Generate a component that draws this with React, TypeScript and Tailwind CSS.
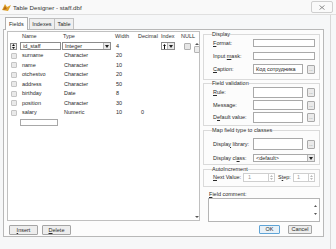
import React from "react";

const rows = [
  { name: "surname", type: "Character", width: "20", dec: "" },
  { name: "name", type: "Character", width: "10", dec: "" },
  { name: "otchestvo", type: "Character", width: "20", dec: "" },
  { name: "address", type: "Character", width: "50", dec: "" },
  { name: "birthday", type: "Date", width: "8", dec: "" },
  { name: "position", type: "Character", width: "30", dec: "" },
  { name: "salary", type: "Numeric", width: "10", dec: "0" },
];

const cols = "grid-cols-[12px_41px_52px_25px_23px_20px_13px]";

function Ellipsis() {
  return (
    <div className="ml-[4px] w-[8px] h-[9px] border border-[#a9a9a9] bg-[#eaeaea] rounded-[1px] flex items-end justify-center pb-[1px] text-[4px] leading-[4px] text-[#555]">
      ...
    </div>
  );
}

function DropBtn() {
  return (
    <div className="w-[7px] self-stretch border-l border-[#b5b5b5] bg-[#e9e9e9] flex items-center justify-center">
      <svg width="4" height="3" viewBox="0 0 4 3">
        <path d="M0 0h4L2 3z" fill="#222" />
      </svg>
    </div>
  );
}

function Spin() {
  return (
    <div className="w-[6px] self-stretch border-l border-[#d0d0d0] flex flex-col">
      <div className="flex-1 flex items-center justify-center">
        <svg width="3" height="2" viewBox="0 0 3 2"><path d="M0 2h3L1.5 0z" fill="#bbb" /></svg>
      </div>
      <div className="flex-1 flex items-center justify-center">
        <svg width="3" height="2" viewBox="0 0 3 2"><path d="M0 0h3L1.5 2z" fill="#bbb" /></svg>
      </div>
    </div>
  );
}

function Label({ children, w = "w-[40px]" }: { children: React.ReactNode; w?: string }) {
  return <span className={`${w} shrink-0`}>{children}</span>;
}

export default function App() {
  return (
    <div className="w-[336px] h-[249px] bg-[#f6f7f8] font-['Liberation_Sans',Arial,sans-serif] text-[5.5px] leading-[7px] text-[#2a2a2a] flex flex-col overflow-hidden">
      {/* title bar */}
      <div className="h-[15px] shrink-0 flex items-center pl-[2px] border-b border-[#e0e0e0] bg-[#f9f9f9]">
        <svg width="9" height="7" viewBox="0 0 9 7">
          <path d="M0 6L3 0l2 3 4-2-3 6z" fill="#e0a32a" />
          <path d="M1 6l2-4 2 3z" fill="#b86b14" />
        </svg>
        <span className="ml-[2px] text-[6.2px] text-[#333]">Table Designer - staff.dbf</span>
        <div className="ml-auto mr-[3px] w-[22px] h-[12px] border border-[#cfcfcf] rounded-[2px] bg-[#fafafa] flex items-center justify-center">
          <svg width="6" height="5" viewBox="0 0 6 5">
            <path d="M0.5 0.5l5 4M5.5 0.5l-5 4" stroke="#777" strokeWidth="0.8" />
          </svg>
        </div>
      </div>

      {/* client */}
      <div className="flex-1 flex flex-col pl-[3px] pr-[6px] pb-[12px] border-r border-[#d8d8d8] mr-[5px]">
        {/* tabs */}
        <div className="h-[14px] shrink-0 flex items-end pl-[2px]">
          <div className="h-[13px] px-[3px] bg-[#fdfdfd] border border-b-0 border-[#b0b0b0] flex items-center -mb-px relative z-10">
            Fields
          </div>
          <div className="h-[11px] px-[2.5px] ml-[1px] bg-[#efefef] border border-b-0 border-[#c0c0c0] flex items-center">
            Indexes
          </div>
          <div className="h-[11px] px-[2.5px] bg-[#efefef] border border-b-0 border-l-0 border-[#c0c0c0] flex items-center">
            Table
          </div>
        </div>

        {/* panel */}
        <div className="flex-1 border border-[#b8b8b8] bg-[#fcfcfc] flex pl-[3px] pt-[1px] pr-[2px]">
          {/* left: grid + buttons */}
          <div className="w-[193px] flex flex-col">
            <div className="h-[190px] border border-[#c0c0c0] bg-white flex">
              <div className="flex-1 flex flex-col">
                <div className={`grid ${cols} h-[9.5px] items-center text-[#333]`}>
                  <span />
                  <span className="pl-[2px]">Name</span>
                  <span className="pl-[2px]">Type</span>
                  <span className="pl-[2px]">Width</span>
                  <span>Decimal</span>
                  <span>Index</span>
                  <span>NULL</span>
                </div>
                {/* first (current) row */}
                <div className={`grid ${cols} h-[9.5px] items-center`}>
                  <div className="ml-[2px] w-[7px] h-[7px] border border-[#8a8a8a] bg-[#f0f0f0] flex items-center justify-center">
                    <svg width="3" height="5" viewBox="0 0 3 5">
                      <path d="M0 2h3L1.5 0zM0 3h3L1.5 5z" fill="#111" />
                    </svg>
                  </div>
                  <div className="h-[8px] border border-[#8c8c8c] bg-white flex items-center pl-[2px]">id_staff</div>
                  <div className="h-[8px] border border-[#8c8c8c] bg-white flex items-center pl-[2px] ml-[1px] mr-[2px]">
                    <span className="flex-1">Integer</span>
                    <DropBtn />
                  </div>
                  <span className="pl-[3px]">4</span>
                  <span />
                  <div className="h-[8px] w-[14px] border border-[#8c8c8c] bg-white flex items-center">
                    <div className="flex-1 flex justify-center">
                      <svg width="3" height="5" viewBox="0 0 3 5">
                        <path d="M1.5 0L0 2h1v3h1V2h1z" fill="#111" />
                      </svg>
                    </div>
                    <DropBtn />
                  </div>
                  <div className="w-[7px] h-[7px] ml-[3px] border border-[#b0b0b0] bg-[#e6e6e6] rounded-[1px]" />
                </div>
                {rows.map((r) => (
                  <div key={r.name} className={`grid ${cols} h-[9.5px] items-center`}>
                    <div className="ml-[3px] w-[6px] h-[6px] border border-[#c4c4c4] bg-[#e9e9e9] rounded-[1px]" />
                    <span className="pl-[2px]">{r.name}</span>
                    <span className="pl-[3px]">{r.type}</span>
                    <span className="pl-[3px]">{r.width}</span>
                    <span className="pl-[3px]">{r.dec}</span>
                    <span />
                    <span />
                  </div>
                ))}
                <div className="h-[9.5px] flex items-center pl-[12px]">
                  <div className="w-[38px] h-[7px] border border-[#a8a8a8] bg-white" />
                </div>
              </div>
              {/* scrollbar */}
              <div className="w-[7px] pt-[10px] flex flex-col items-center">
                <svg width="4" height="4" viewBox="0 0 4 4">
                  <path d="M0 3h4L2 1z" fill="#555" />
                </svg>
                <div className="w-[6px] h-[7px] border border-[#b4b4b4] bg-[#ececec] rounded-[1px]" />
                <div className="flex-1" />
                <svg width="4" height="4" viewBox="0 0 4 4" className="mb-[1px]">
                  <path d="M0 1h4L2 3z" fill="#555" />
                </svg>
              </div>
            </div>
            <div className="mt-[4px] flex gap-[4px] pl-[2px]">
              <div className="w-[29px] h-[10px] border border-[#a5a5a5] bg-[#ededed] rounded-[1px] flex items-center justify-center">
                <span className="underline decoration-[0.5px]">I</span>nsert
              </div>
              <div className="w-[29px] h-[10px] border border-[#a5a5a5] bg-[#ededed] rounded-[1px] flex items-center justify-center">
                <span className="underline decoration-[0.5px]">D</span>elete
              </div>
            </div>
          </div>

          {/* right: properties */}
          <div className="w-[117px] ml-[3px] flex flex-col">
            <fieldset className="border border-[#dadada] pl-[9px] pr-[4px] pb-[5px] pt-[1px]">
              <legend className="px-0 -ml-[1px]">Display</legend>
              <div className="h-[8px] flex items-center">
                <Label><span className="underline decoration-[0.5px]">F</span>ormat:</Label>
                <div className="flex-1 h-[8px] border border-[#a9a9a9] bg-white" />
              </div>
              <div className="h-[8px] mt-[5px] flex items-center">
                <Label>Input <span className="underline decoration-[0.5px]">m</span>ask:</Label>
                <div className="flex-1 h-[8px] border border-[#a9a9a9] bg-white" />
              </div>
              <div className="h-[10px] mt-[4px] flex items-center">
                <Label><span className="underline decoration-[0.5px]">C</span>aption:</Label>
                <div className="flex-1 h-[10px] border border-[#a9a9a9] bg-white flex items-center pl-[2px] text-[#222]">Код сотрудника</div>
                <Ellipsis />
              </div>
            </fieldset>

            <fieldset className="border border-[#dadada] pl-[9px] pr-[4px] pb-[2px]">
              <legend className="px-0 -ml-[1px]">Field validation</legend>
              <div className="h-[11px] flex items-center">
                <Label><span className="underline decoration-[0.5px]">R</span>ule:</Label>
                <div className="flex-1 h-[11px] border border-[#a9a9a9] bg-white" />
                <Ellipsis />
              </div>
              <div className="h-[10px] mt-[2px] flex items-center">
                <Label>Message:</Label>
                <div className="flex-1 h-[10px] border border-[#a9a9a9] bg-white" />
                <Ellipsis />
              </div>
              <div className="h-[11px] mt-[2px] flex items-center">
                <Label>D<span className="underline decoration-[0.5px]">e</span>fault value:</Label>
                <div className="flex-1 h-[11px] border border-[#a9a9a9] bg-white" />
                <Ellipsis />
              </div>
            </fieldset>

            <fieldset className="mt-[1px] border border-[#dadada] pl-[9px] pr-[4px] pb-[2px] pt-[4px]">
              <legend className="px-0 -ml-[1px]">Map field type to classes</legend>
              <div className="h-[12px] flex items-center">
                <Label>Displa<span className="underline decoration-[0.5px]">y</span> library:</Label>
                <div className="flex-1 h-[12px] border border-[#a9a9a9] bg-white" />
                <Ellipsis />
              </div>
              <div className="h-[8px] mt-[4px] flex items-center">
                <Label>Display cl<span className="underline decoration-[0.5px]">a</span>ss:</Label>
                <div className="flex-1 h-[8px] border border-[#a9a9a9] bg-white flex items-center pl-[2px]">
                  <span className="flex-1">&lt;default&gt;</span>
                  <DropBtn />
                </div>
              </div>
            </fieldset>

            <fieldset className="mt-[1px] border border-[#dadada] pl-[9px] pr-[4px] pb-[4px]">
              <legend className="px-0 -ml-[1px]">AutoIncrement</legend>
              <div className="h-[9px] flex items-center">
                <Label w="w-[30px]"><span className="underline decoration-[0.5px]">N</span>ext Value:</Label>
                <div className="w-[32px] h-[9px] border border-[#cfcfcf] bg-white flex items-center pl-[4px] text-[#9a9a9a]">
                  <span className="flex-1">1</span>
                  <Spin />
                </div>
                <span className="ml-[3px] w-[15px]">S<span className="underline decoration-[0.5px]">t</span>ep:</span>
                <div className="flex-1 h-[9px] border border-[#cfcfcf] bg-white flex items-center pl-[3px] text-[#9a9a9a]">
                  <span className="flex-1">1</span>
                  <Spin />
                </div>
              </div>
            </fieldset>

            <div className="mt-[4px] pl-[6px]">
              <span className="underline decoration-[0.5px]">F</span>ield comment:
            </div>
            <div className="ml-[5px] h-[24px] border border-[#b5b5b5] bg-white flex justify-end">
              <div className="w-[7px] flex flex-col items-center justify-center gap-[6px]">
                <svg width="3" height="2" viewBox="0 0 3 2"><path d="M0 2h3L1.5 0z" fill="#555" /></svg>
                <svg width="3" height="2" viewBox="0 0 3 2"><path d="M0 0h3L1.5 2z" fill="#555" /></svg>
              </div>
            </div>
            <div className="mt-[3px] flex justify-end gap-[8px] pr-[8px]">
              <div className="w-[21px] h-[9px] border border-[#5fa4d6] bg-[#e8f1f8] rounded-[1px] flex items-center justify-center">
                OK
              </div>
              <div className="w-[24px] h-[9px] border border-[#a5a5a5] bg-[#ededed] rounded-[1px] flex items-center justify-center">
                Cancel
              </div>
            </div>
          </div>
        </div>
      </div>
    </div>
  );
}
